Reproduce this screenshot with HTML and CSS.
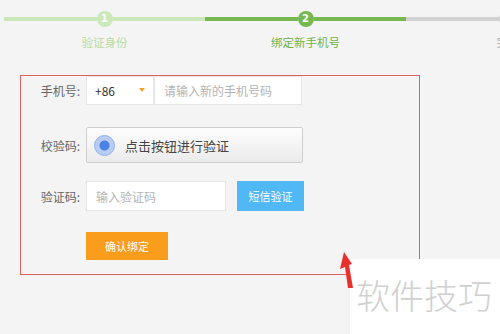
FILE: index.html
```html
<!DOCTYPE html>
<html lang="zh-CN">
<head>
    <meta charset="UTF-8" />
    <meta name="viewport" content="width=device-width, initial-scale=1.0" />
    <title>绑定新手机号</title>
    <link rel="stylesheet" href="styles.css">
</head>
<body>
    <div class="page">
        <div class="steps">
            <div class="step done">
                <div class="track"><span class="line"></span><span class="dot">1</span><span class="line"></span></div>
                <div class="step-label">验证身份</div>
            </div>
            <div class="step current">
                <div class="track"><span class="line"></span><span class="dot">2</span><span class="line"></span></div>
                <div class="step-label">绑定新手机号</div>
            </div>
            <div class="step todo">
                <div class="track"><span class="line"></span><span class="dot">3</span><span class="line"></span></div>
                <div class="step-label">完成</div>
            </div>
        </div>

        <form class="bind-form">
            <div class="form-row row-phone">
                <label class="form-label">手机号:</label>
                <div class="area-select">+86<span class="caret"></span></div>
                <input class="text-input phone-input" type="text" placeholder="请输入新的手机号码" />
            </div>
            <div class="form-row row-check">
                <label class="form-label">校验码:</label>
                <button type="button" class="check-btn"><span class="radio"></span>点击按钮进行验证</button>
            </div>
            <div class="form-row row-code">
                <label class="form-label">验证码:</label>
                <input class="text-input code-input" type="text" placeholder="输入验证码" />
                <button type="button" class="sms-btn">短信验证</button>
            </div>
            <div class="form-row row-submit">
                <span class="form-label"></span>
                <button type="submit" class="submit-btn">确认绑定</button>
            </div>
        </form>

        <!-- screenshot annotations -->
        <div class="mark-box"></div>
        <div class="watermark">软件技巧</div>
        <svg class="mark-arrow" width="24" height="44" viewBox="0 0 24 44">
            <polygon points="8,4 16,16 13,17 17,40 12,40 9,19 4,21" fill="#e8302c" />
        </svg>
    </div>
</body>
</html>
```

FILE: styles.css
```css
body {
    margin: 0;
    background-color: #f4f4f4;
    font-family: "Noto Sans CJK SC", "Noto Sans", sans-serif;
    color: #333;
    overflow: hidden;
}
.page {
    position: relative;
    width: 500px;
    height: 334px;
    overflow: hidden;
}
.steps {
    display: flex;
    padding: 11px 0 0 4px;
}
.step {
    flex: 0 0 201px;
    display: flex;
    flex-direction: column;
    align-items: center;
}
.track {
    display: flex;
    align-items: center;
    width: 100%;
    height: 16px;
}
.track .line {
    flex: 1;
    height: 4px;
}
.track .dot {
    width: 16px;
    height: 16px;
    border-radius: 50%;
    color: #fff;
    font-size: 10px;
    font-weight: bold;
    line-height: 16px;
    text-align: center;
    font-family: "DejaVu Sans", sans-serif;
}
.step-label {
    margin-top: 7px;
    font-size: 11.5px;
    line-height: 16px;
}
.done .line,
.done .dot {
    background-color: #cbe8bb;
}
.done .step-label {
    color: #b6dba2;
}
.current .line,
.current .dot {
    background-color: #76b952;
}
.current .step-label {
    color: #6fb34a;
}
.todo .line,
.todo .dot {
    background-color: #d2d2d2;
}
.todo .step-label {
    color: #aaa;
    padding-left: 3px;
}

.bind-form {
    display: flex;
    flex-direction: column;
    padding-left: 20px;
    margin-top: 26px;
}
.form-row {
    display: flex;
    align-items: center;
}
.form-label {
    width: 60px;
    margin-right: 6px;
    text-align: right;
    font-size: 12px;
    color: #666;
}
.row-phone {
    height: 29px;
}
.row-check {
    height: 36px;
    margin-top: 22px;
}
.row-code {
    height: 30px;
    margin-top: 18px;
}
.row-submit {
    height: 28px;
    margin-top: 21px;
}
.area-select {
    position: relative;
    box-sizing: border-box;
    width: 68px;
    height: 29px;
    padding-left: 8px;
    background: #fff;
    border: 1px solid #e6e6e6;
    font-size: 12px;
    line-height: 27px;
    color: #333;
}
.caret {
    position: absolute;
    right: 8px;
    top: 11px;
    border-left: 3px solid transparent;
    border-right: 3px solid transparent;
    border-top: 4px solid #f5a12a;
}
.text-input {
    box-sizing: border-box;
    height: 100%;
    padding: 0 9px;
    background: #fff;
    border: 1px solid #e6e6e6;
    font-family: inherit;
    font-size: 12px;
    color: #333;
    outline: none;
}
.text-input::placeholder {
    color: #b4b4b4;
}
.phone-input {
    width: 148px;
}
.code-input {
    width: 140px;
}
.check-btn {
    display: flex;
    align-items: center;
    box-sizing: border-box;
    width: 217px;
    height: 36px;
    padding: 0 0 0 7px;
    border: 1px solid #cfcfcf;
    border-radius: 2px;
    background: linear-gradient(#fdfdfd, #ebebeb);
    font-family: inherit;
    font-size: 13px;
    color: #444;
}
.radio {
    box-sizing: border-box;
    width: 21px;
    height: 21px;
    margin-right: 10px;
    border-radius: 50%;
    border: 1px solid #8eafec;
    background: radial-gradient(circle, #4a83e4 0, #4a83e4 4.5px, #b9cdf3 5.5px);
}
.sms-btn,
.submit-btn {
    border: none;
    color: #fff;
    font-family: inherit;
    font-size: 11px;
}
.sms-btn {
    width: 67px;
    height: 30px;
    margin-left: 11px;
    background-color: #4fb8f5;
}
.submit-btn {
    width: 82px;
    height: 28px;
    background-color: #fa9c1c;
}

.mark-box {
    position: absolute;
    left: 20px;
    top: 75px;
    width: 400px;
    height: 200px;
    box-sizing: border-box;
    border: 1px solid #d9645f;
}
.watermark {
    position: absolute;
    left: 350px;
    top: 259px;
    width: 150px;
    height: 75px;
    box-sizing: border-box;
    padding: 19px 0 0 6px;
    background: #fff;
    font-size: 34px;
    font-weight: 300;
    line-height: 34px;
    color: #d0d0d0;
}
.mark-arrow {
    position: absolute;
    left: 336px;
    top: 248px;
}
```
